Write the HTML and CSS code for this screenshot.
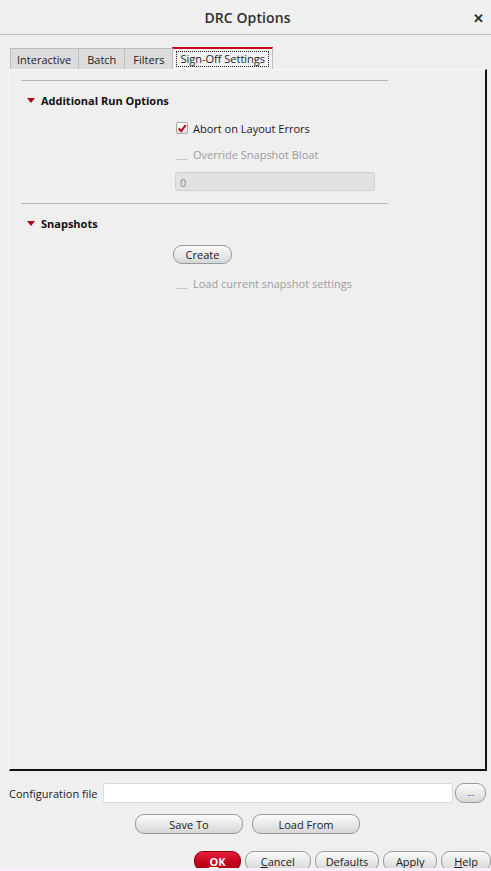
FILE: index.html
```html
<!DOCTYPE html>
<html>
<head>
<meta charset="utf-8">
<link rel="stylesheet" href="styles.css">
</head>
<body>
<div class="window">
  <div class="titlebar">
    <span class="title">DRC Options</span>
    <span class="close">✕</span>
  </div>
  <div class="tabs">
    <div class="tab">Interactive</div>
    <div class="tab">Batch</div>
    <div class="tab">Filters</div>
    <div class="tab active"><span class="focus">Sign-Off Settings</span></div>
  </div>
  <div class="panel">
    <div class="inner">
      <div class="section">
        <div class="heading"><span class="tri"></span>Additional Run Options</div>
        <div class="opts">
          <label class="check">
            <span class="box checked"><svg width="12" height="11" viewBox="0 0 12 11"><path d="M2 5.5 L5 8.5 L10.5 1.5" fill="none" stroke="#c8001a" stroke-width="2.4"/></svg></span>
            <span>Abort on Layout Errors</span>
          </label>
          <label class="check disabled">
            <span class="box"></span>
            <span>Override Snapshot Bloat</span>
          </label>
          <div class="field disabled">0</div>
        </div>
      </div>
      <div class="section">
        <div class="heading"><span class="tri"></span>Snapshots</div>
        <div class="opts snaps">
          <div><button class="btn create">Create</button></div>
          <label class="check disabled">
            <span class="box"></span>
            <span>Load current snapshot settings</span>
          </label>
        </div>
      </div>
    </div>
  </div>
  <div class="config">
    <span class="cfg-label">Configuration file</span>
    <div class="cfg-input"></div>
    <button class="btn dots">...</button>
  </div>
  <div class="saveload">
    <button class="btn wide">Save To</button>
    <button class="btn wide">Load From</button>
  </div>
  <div class="actions">
    <button class="btn ok"><u>O</u>K</button>
    <button class="btn cancel"><u>C</u>ancel</button>
    <button class="btn defaults">Defaults</button>
    <button class="btn apply">Apply</button>
    <button class="btn help"><u>H</u>elp</button>
  </div>
  <div class="strip"></div>
</div>
</body>
</html>
```
FILE: styles.css
```css
* { box-sizing: border-box; }
html, body { margin: 0; padding: 0; }
body {
  width: 491px;
  height: 871px;
  background: #efefef;
  font-family: "Open Sans", "Noto Sans", sans-serif;
  font-size: 11px;
  color: #1a1a1a;
  overflow: hidden;
}
.window { display: flex; flex-direction: column; height: 871px; }
.window > * { flex-shrink: 0; }
.titlebar {
  height: 35px;
  border-bottom: 1px solid #bcbcbc;
  display: flex;
  align-items: center;
  justify-content: center;
  position: relative;
  background: #f0f0f0;
}
.title { font-size: 14px; color: #2e2e2e; font-weight: 600; letter-spacing: 0.1px; padding-left: 4px; }
.close {
  position: absolute;
  right: 7px;
  top: 9px;
  font-size: 13px;
  font-weight: bold;
  color: #2a2a2a;
}
.tabs {
  display: flex;
  padding: 0 0 0 10px;
  height: 34px;
  align-items: flex-end;
}
.tab {
  height: 21px;
  border: 1px solid #bdbdbd;
  border-bottom: none;
  background: #dcdcdc;
  padding: 0 7px 0 7px;
  display: flex;
  align-items: center;
  color: #222;
  margin-right: -1px;
  font-size: 11px;
}
.tab:first-child { padding: 0 7px 0 6px; }
.tab:nth-child(2), .tab:nth-child(3) { padding: 0 8px; }
.tab.active {
  background: #f2f2f2;
  border-top: 2px solid #c8001a;
  height: 22px;
  padding: 0 3px;
}
.focus { border: 1px dotted #222; padding: 0 3px; line-height: 14px; }
.panel {
  margin: 0 4px 0 9px;
  height: 702px;
  border-top: 1px solid #fafafa;
  border-left: 1px solid #fafafa;
  border-right: 2px solid #111;
  border-bottom: 2px solid #111;
  padding: 10px 0 0 11px;
}
.inner { width: 367px; }
.section { border-top: 1px solid #b5b5b5; }
.heading {
  font-weight: bold;
  font-size: 11px;
  height: 20px;
  margin-top: 9px;
  display: flex;
  align-items: center;
  padding-left: 6px;
  color: #111;
}
.tri {
  width: 0; height: 0;
  border-left: 4px solid transparent;
  border-right: 4px solid transparent;
  border-top: 5px solid #b0001a;
  margin-right: 6px;
}
.opts { padding-left: 154px; padding-bottom: 12px; display: flex; flex-direction: column; }
.section:first-child .opts { padding-top: 1px; }
.check { display: flex; align-items: center; height: 18px; margin-top: 8px; }
.check + .check { margin-top: 8px; }
.box {
  width: 12px; height: 12px;
  margin: 0 5px 0 1px;
  display: flex; align-items: center; justify-content: center;
  border-bottom: 1px solid #c8c8c8;
}
.box.checked {
  background: linear-gradient(#ffffff, #e0e0e0);
  border: 1px solid #a8a8a8;
  border-radius: 2px;
}
.check.disabled { color: #9c9c9c; }
.field {
  margin-top: 9px;
  width: 200px;
  height: 19px;
  border: 1px solid #cfcfcf;
  border-radius: 3px;
  background: #e2e2e2;
  padding: 2px 4px;
  color: #8a8a8a;
}
.snaps { padding-top: 12px; }
.snaps .check { margin-top: 10px; }
.btn {
  font-family: "Open Sans", "Noto Sans", sans-serif;
  font-size: 11px;
  color: #1a1a1a;
  height: 19px;
  border: 1px solid #9a9a9a;
  border-radius: 9px;
  background: linear-gradient(#fbfbfb, #e6e6e6 60%, #d6d6d6);
  padding: 0;
  line-height: 17px;
  cursor: default;
}
.create { width: 59px; margin-left: -2px; margin-top: 0; }
.config {
  display: flex;
  align-items: center;
  padding: 12px 5px 0 9px;
  height: 32px;
}
.cfg-label { width: 94px; color: #1a1a1a; }
.cfg-input {
  width: 351px;
  height: 20px;
  background: #fff;
  border: 1px solid #dadada;
  border-radius: 2px;
}
.dots { width: 31px; height: 20px; margin-left: 2px; font-size: 9px; line-height: 16px; }
.saveload {
  display: flex;
  padding: 11px 0 0 135px;
  gap: 9px;
}
.wide { width: 108px; height: 20px; }
.actions {
  display: flex;
  padding: 17px 0 0 194px;
  gap: 4px;
}
.actions .btn { height: 20px; }
.ok {
  width: 47px;
  background: linear-gradient(#e8203a, #c4001a 60%, #a80015);
  border-color: #8a0010;
  color: #fff;
  font-weight: bold;
}
.cancel { width: 66px; }
.defaults { width: 65px; }
.apply { width: 54px; }
.help { width: 50px; }
u { text-decoration: underline; }
.strip { height: 3px; background: #fbeefc; margin-top: -3px; position: relative; }
```
